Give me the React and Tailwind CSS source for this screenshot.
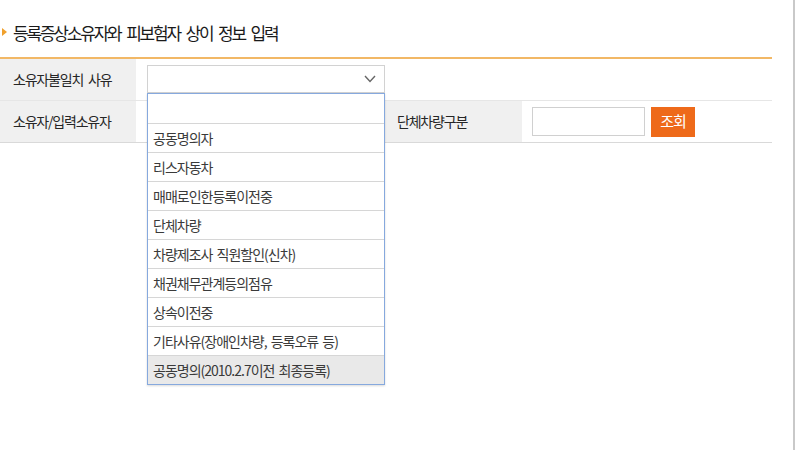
export default function App() {
  const items = [
    "공동명의자",
    "리스자동차",
    "매매로인한등록이전중",
    "단체차량",
    "차량제조사 직원할인(신차)",
    "채권채무관계등의점유",
    "상속이전중",
    "기타사유(장애인차량, 등록오류 등)",
    "공동명의(2010.2.7이전 최종등록)",
  ];
  const itemCls =
    "h-[29px] border-t border-[#d6d6d6] pl-[5px] flex items-center text-[14px] tracking-[-1px] [word-spacing:2px] text-[#3a3a3a]";
  return (
    <div
      className="w-[800px] h-[450px] bg-white overflow-hidden relative flex"
      style={{ fontFamily: '"Noto Sans CJK KR", "Noto Sans", sans-serif' }}
    >
      <div className="w-[793px] shrink-0 relative">
        <div className="flex items-center h-[24px] mt-[20px]">
          <div className="ml-[2px] w-0 h-0 border-y-[4px] border-y-transparent border-l-[5px] border-l-[#f0a02c]" />
          <div className="ml-[6px] text-[17px] tracking-[-2.2px] [word-spacing:4px] text-[#1a1a1a] leading-none">
            등록증상소유자와 피보험자 상이 정보 입력
          </div>
        </div>
        <div className="mt-[13px] w-[772px] border-t-2 border-[#f2b866]">
          <div className="flex h-[42px] border-b border-[#e6e6e6]">
            <div className="w-[136px] bg-[#f0f0f0] pl-[13px] flex items-center text-[14px] tracking-[-1.2px] [word-spacing:3px] text-[#262626]">
              소유자불일치 사유
            </div>
            <div className="pl-[11px] pt-[6px]">
              <div className="w-[238px] h-[28px] border border-[#d2d2d2] bg-white flex items-center justify-end pr-[8px]">
                <svg width="12" height="8" viewBox="0 0 12 8">
                  <path d="M1 1 L6 6.5 L11 1" fill="none" stroke="#666" strokeWidth="1.4" />
                </svg>
              </div>
            </div>
          </div>
          <div className="flex h-[42px] border-b border-[#d9d9d9]">
            <div className="w-[136px] bg-[#f0f0f0] pl-[13px] flex items-center text-[14px] tracking-[-1.2px] text-[#262626]">
              소유자/입력소유자
            </div>
            <div className="w-[249px]" />
            <div className="w-[137px] bg-[#f0f0f0] pl-[12px] flex items-center text-[14px] tracking-[-1.2px] text-[#262626]">
              단체차량구분
            </div>
            <div className="flex items-center pl-[10px] gap-[6px]">
              <div className="w-[113px] h-[29px] border border-[#d0d0d0] bg-white" />
              <div className="w-[44px] h-[30px] bg-[#ee6a1a] text-white flex items-center justify-center text-[15px] tracking-[-1px]">
                조회
              </div>
            </div>
          </div>
        </div>
        <div className="absolute left-[147px] top-[93px] w-[238px] border border-[#86a9de] bg-white shadow-[0_1px_2px_rgba(0,0,0,0.15)]">
          <div className="h-[29px]" />
          {items.map((t, i) => (
            <div
              key={i}
              className={i === items.length - 1 ? itemCls + " bg-[#e9e9e9]" : itemCls}
            >
              {t}
            </div>
          ))}
        </div>
      </div>
      <div className="w-[2px] h-full bg-[#c9c9c9]" />
      <div className="flex-1 bg-white" />
    </div>
  );
}
